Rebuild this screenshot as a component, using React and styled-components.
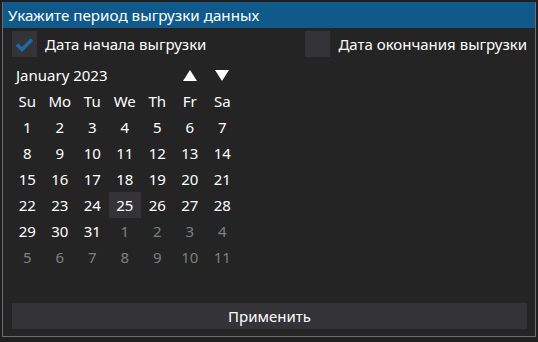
import React from "react";
import styled, { createGlobalStyle } from "styled-components";

const Global = createGlobalStyle`
  html, body { margin: 0; padding: 0; background: #1f1f1f; }
  body { font-family: "Noto Sans", "Open Sans", sans-serif; color: #fff; }
  #root { width: 538px; height: 342px; }
`;

const Window = styled.div`
  position: relative;
  margin: 2px 0 0 2px;
  width: 532px;
  height: 333px;
  border: 1px solid #6e6e6e;
  border-top-color: #0f5a8a;
  background: #242424;
  display: flex;
  flex-direction: column;
`;

const TitleBar = styled.div`
  height: 25px;
  background: #0f5a8a;
  padding-left: 5px;
  font-size: 15.2px;
  line-height: 25px;
  white-space: nowrap;
`;

const Body = styled.div`
  flex: 1;
  display: flex;
  flex-direction: column;
  padding: 3px 8px 7px 9px;
`;

const CheckRow = styled.div`
  display: flex;
  justify-content: space-between;
  align-items: center;
  height: 26px;
`;

const CheckItem = styled.label`
  display: flex;
  align-items: center;
  gap: 8px;
  font-size: 15px;
  white-space: nowrap;
`;

const Box = styled.span`
  width: 25px;
  height: 26px;
  background: #333338;
  display: flex;
  align-items: center;
  justify-content: center;
`;

const Calendar = styled.div`
  margin-top: 5px;
  width: 228px;
  margin-left: -1px;
  display: grid;
  grid-template-columns: repeat(7, 32.5px);
  grid-auto-rows: 26px;
  font-size: 15px;
`;

const Month = styled.div`
  grid-column: 1 / span 5;
  display: flex;
  align-items: center;
  padding-left: 5px;
  font-size: 15px;
`;

const Arrow = styled.div`
  display: flex;
  align-items: center;
  justify-content: center;
`;

const Cell = styled.div`
  display: flex;
  align-items: center;
  justify-content: center;
  color: ${(p) => (p.$muted ? "#7f7f7f" : "#ffffff")};
  background: ${(p) => (p.$today ? "#333338" : "transparent")};
`;

const Spacer = styled.div`
  flex: 1;
`;

const Button = styled.button`
  height: 26px;
  border: none;
  background: #333338;
  color: #fff;
  font-family: inherit;
  font-size: 15px;
  padding: 0;
`;

const Check = () => (
  <svg width="19" height="15" viewBox="0 0 19 15">
    <path d="M2 7.5 L7 12.5 L17 2.5" stroke="#1e6aa8" strokeWidth="3.6" fill="none" />
  </svg>
);

const days = ["Su", "Mo", "Tu", "We", "Th", "Fr", "Sa"];

export default function App() {
  const cells = [];
  for (let i = 1; i <= 31; i++) cells.push({ d: i });
  for (let i = 1; i <= 11; i++) cells.push({ d: i, muted: true });
  return (
    <>
      <Global />
      <Window>
        <TitleBar>Укажите период выгрузки данных</TitleBar>
        <Body>
          <CheckRow>
            <CheckItem>
              <Box>
                <Check />
              </Box>
              Дата начала выгрузки
            </CheckItem>
            <CheckItem>
              <Box />
              Дата окончания выгрузки
            </CheckItem>
          </CheckRow>
          <Calendar>
            <Month>January 2023</Month>
            <Arrow>
              <svg width="14" height="11" viewBox="0 0 14 11">
                <path d="M7 0 L14 11 L0 11 Z" fill="#fff" />
              </svg>
            </Arrow>
            <Arrow>
              <svg width="14" height="11" viewBox="0 0 14 11">
                <path d="M0 0 L14 0 L7 11 Z" fill="#fff" />
              </svg>
            </Arrow>
            {days.map((d) => (
              <Cell key={d}>{d}</Cell>
            ))}
            {cells.map((c, i) => (
              <Cell key={i} $muted={c.muted} $today={!c.muted && c.d === 25}>
                {c.d}
              </Cell>
            ))}
          </Calendar>
          <Spacer />
          <Button>Применить</Button>
        </Body>
      </Window>
    </>
  );
}
